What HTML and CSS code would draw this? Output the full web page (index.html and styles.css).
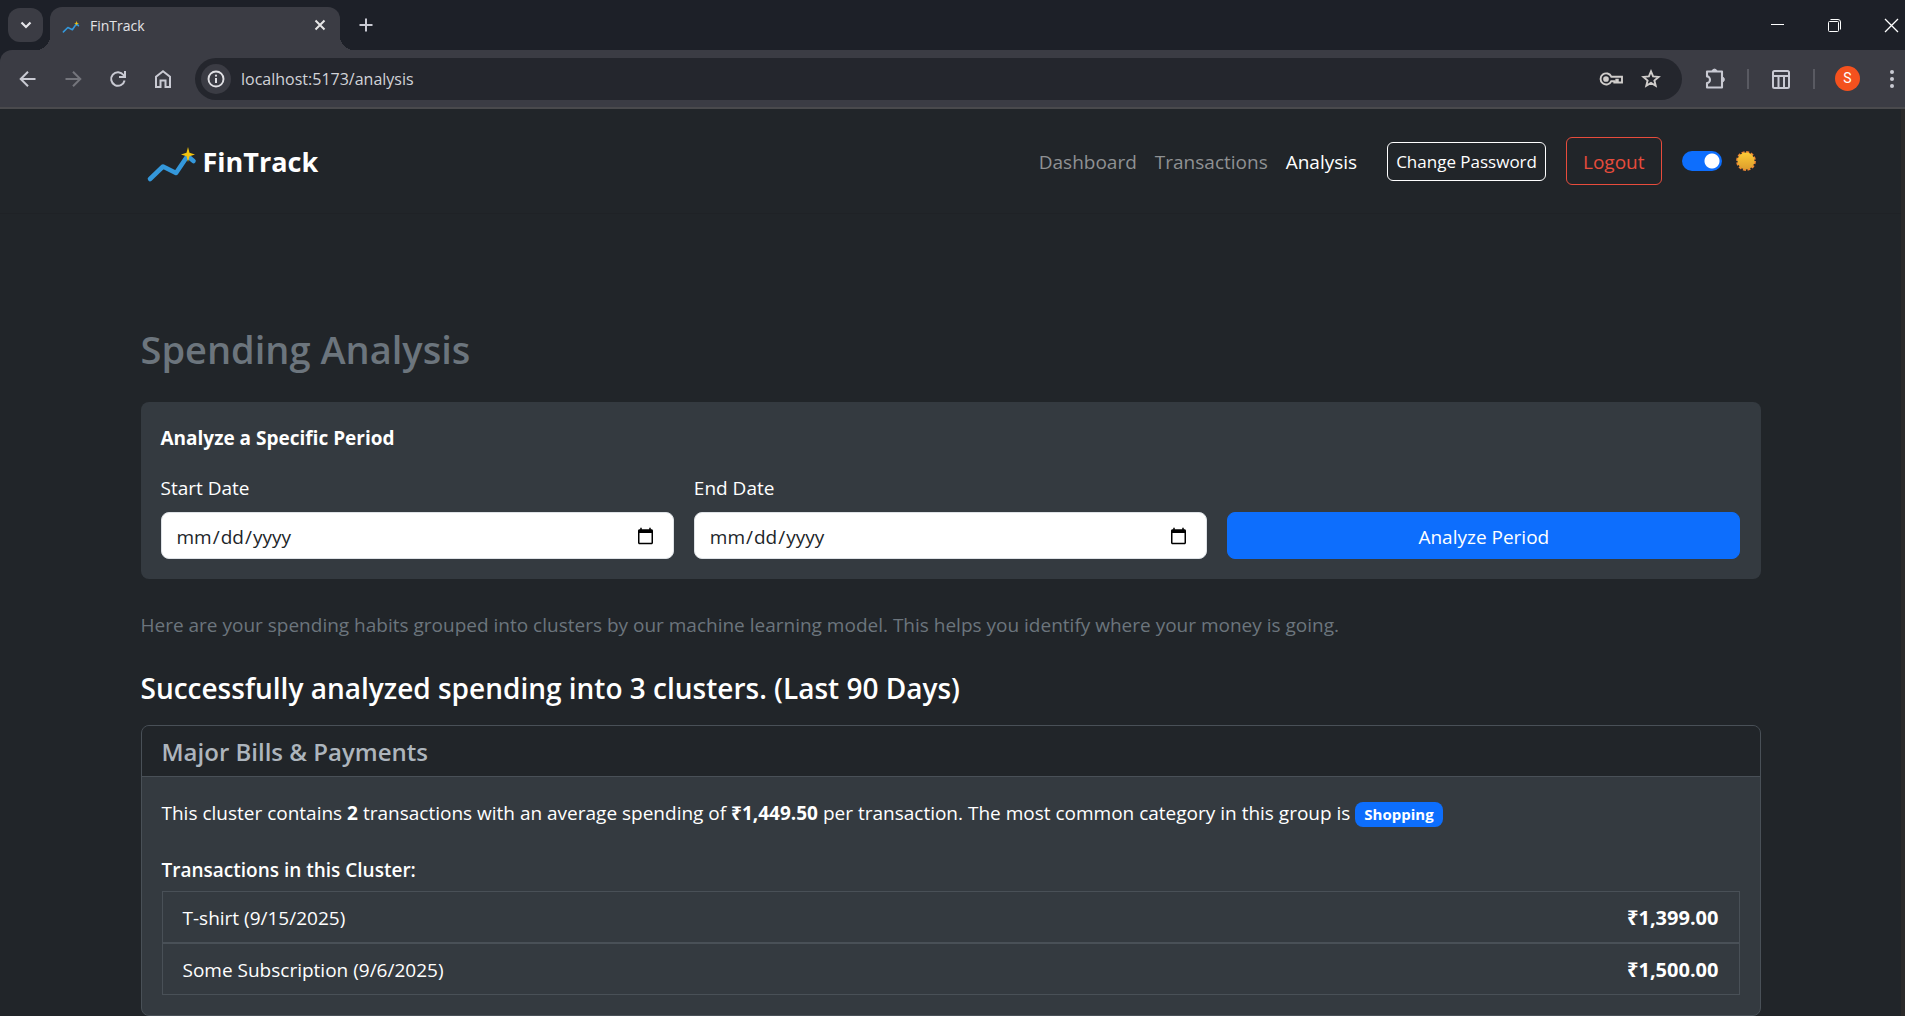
FILE: index.html
```html
<!DOCTYPE html>
<html lang="en-US">
<head>
<meta charset="utf-8">
<meta name="viewport" content="width=device-width, initial-scale=1">
<title>FinTrack</title>
<link rel="stylesheet" href="styles.css">
</head>
<body>
<svg class="defs" width="0" height="0" aria-hidden="true">
  <symbol id="fin-logo" viewBox="0 0 52 40">
    <path d="M4 34 17 21.500 30 28 41.500 11 47.500 16" fill="none" stroke="#3498db" stroke-width="4.600" stroke-linecap="round" stroke-linejoin="round"/>
    <path d="M42 2 43.500 7.800 49 9.500 43.500 11.200 42 17 40.500 11.200 35 9.500 40.500 7.800z" fill="#f1c40f"/>
  </symbol>
</svg>

<header class="browser">
  <div class="tabstrip">
    <button class="tab-search" aria-label="Search tabs">
      <svg width="14" height="14" viewBox="0 0 14 14"><path d="M2.500 4.500 7 9l4.500-4.500" fill="none" stroke="currentColor" stroke-width="2.200"/></svg>
    </button>
    <div class="tab">
      <svg class="favicon" width="18" height="14"><use href="#fin-logo"/></svg>
      <span class="tab-title">FinTrack</span>
      <button class="icon-btn" aria-label="Close tab">
        <svg width="12" height="12" viewBox="0 0 12 12"><path d="m1.500 1.500 9 9m0-9-9 9" stroke="currentColor" stroke-width="2"/></svg>
      </button>
    </div>
    <button class="icon-btn new-tab" aria-label="New tab">
      <svg width="14" height="14" viewBox="0 0 14 14"><path d="M7 .5v13M.5 7h13" stroke="currentColor" stroke-width="2"/></svg>
    </button>
    <div class="window-controls">
      <button class="icon-btn" aria-label="Minimize"><svg width="15" height="15" viewBox="0 0 15 15"><path d="M1 6.500h13" stroke="#fff"/></svg></button>
      <button class="icon-btn" aria-label="Restore"><svg width="15" height="15" viewBox="0 0 15 15" fill="none" stroke="#fff"><rect x="1.500" y="3.500" width="10" height="10" rx="1"/><path d="M3.500 1.500H11a2.500 2.500 0 0 1 2.500 2.500v7.500"/></svg></button>
      <button class="icon-btn" aria-label="Close"><svg width="15" height="15" viewBox="0 0 15 15"><path d="m1 1 13 13m0-13L1 14" stroke="#fff" stroke-width="1.300"/></svg></button>
    </div>
  </div>

  <div class="toolbar">
    <button class="icon-btn" aria-label="Back"><svg width="24" height="24" viewBox="0 0 24 24" fill="none" stroke="currentColor" stroke-width="2"><path d="M19.500 12H5M12 4.700 4.700 12l7.300 7.300"/></svg></button>
    <button class="icon-btn dim" aria-label="Forward"><svg width="24" height="24" viewBox="0 0 24 24" fill="none" stroke="currentColor" stroke-width="2"><path d="M4.500 12H19M12 4.700l7.300 7.300-7.300 7.300"/></svg></button>
    <button class="icon-btn" aria-label="Reload"><svg width="24" height="24" viewBox="0 0 24 24" fill="none" stroke="currentColor" stroke-width="2"><path d="M18.600 13.500A6.800 6.800 0 1 1 17.500 8l1.200 1.600M19 4v6h-6"/></svg></button>
    <button class="icon-btn" aria-label="Home"><svg width="24" height="24" viewBox="0 0 24 24" fill="none" stroke="currentColor" stroke-width="2"><path d="M5 20V9.700l7-5.400 7 5.400V20h-4.500v-6.500h-5V20z"/></svg></button>
    <div class="omnibox">
      <button class="site-info" aria-label="Site information"><svg width="18" height="18" viewBox="0 0 18 18"><circle cx="9" cy="9" r="7.500" fill="none" stroke="currentColor" stroke-width="1.900"/><path d="M9 8v5" stroke="currentColor" stroke-width="2"/><circle cx="9" cy="5.700" r="1.100" fill="currentColor"/></svg></button>
      <input class="url" type="text" aria-label="Address" value="localhost:5173/analysis">
      <div class="omnibox-actions">
        <button class="icon-btn" aria-label="Saved passwords"><svg width="24" height="24" viewBox="0 0 24 24" fill="none" stroke="currentColor" stroke-width="1.900"><path d="M12.300 9.700H23v5.800h-4.200v-2.800h-1.500v2.800h-2v-1.300h-3A5.600 5.600 0 1 1 12.300 9.700z"/><circle cx="7" cy="12" r="1.900" fill="currentColor"/></svg></button>
        <button class="icon-btn" aria-label="Bookmark"><svg width="24" height="24" viewBox="0 0 24 24" fill="none" stroke="currentColor" stroke-width="1.900"><path d="m12 4.400 2.100 5 5.500.5-4.200 3.600 1.300 5.300-4.700-2.900-4.700 2.900 1.300-5.300-4.200-3.600 5.500-.5z"/></svg></button>
      </div>
    </div>
    <div class="tools">
      <button class="icon-btn" aria-label="Extensions"><svg width="24" height="24" viewBox="0 0 24 24"><path d="M4 4.500h15v16H4V16a3 3.300 0 0 0 0-6.600z" fill="none" stroke="currentColor" stroke-width="2.100" stroke-linejoin="round"/><path d="M9 4a2.600 2.600 0 0 1 5 0zM19.500 10a2.600 2.600 0 0 1 0 5z" fill="currentColor" stroke="currentColor"/></svg></button>
      <span class="sep"></span>
      <button class="icon-btn" aria-label="Side panel"><svg width="24" height="24" viewBox="0 0 24 24" fill="none" stroke="currentColor" stroke-width="2"><rect x="4" y="4" width="16" height="17" rx="1.500"/><path d="M4 9h16M9.500 10v11M15 10v11"/></svg></button>
      <span class="sep"></span>
      <button class="avatar" aria-label="Profile">S</button>
      <button class="icon-btn" aria-label="Menu"><svg width="24" height="24" viewBox="0 0 24 24" fill="currentColor"><circle cx="12" cy="5" r="2"/><circle cx="12" cy="12" r="2"/><circle cx="12" cy="19" r="2"/></svg></button>
    </div>
  </div>
</header>

<div class="viewport">
  <nav class="navbar">
    <div class="navbar-inner">
      <a class="brand" href="#"><svg width="52" height="40" aria-hidden="true"><use href="#fin-logo"/></svg>FinTrack</a>
      <div class="nav-links">
        <a class="nav-link" href="#">Dashboard</a>
        <a class="nav-link" href="#">Transactions</a>
        <a class="nav-link active" href="#">Analysis</a>
      </div>
      <div class="nav-actions">
        <button class="btn btn-light">Change Password</button>
        <button class="btn btn-danger">Logout</button>
        <label class="theme">
          <input class="switch" type="checkbox" checked aria-label="Dark theme">
          <svg width="20" height="20" viewBox="0 0 20 20" aria-hidden="true">
            <defs><linearGradient id="sun" x1="0" y1="0" x2="0" y2="1"><stop offset="0" stop-color="#fccb36"/><stop offset="1" stop-color="#dd9d2d"/></linearGradient></defs>
            <circle cx="10" cy="10" r="8.800" fill="none" stroke="#f08a33" stroke-width="2.200" stroke-dasharray="3 1.600"/>
            <circle cx="10" cy="10" r="8.500" fill="url(#sun)"/>
          </svg>
        </label>
      </div>
    </div>
  </nav>

  <main class="container">
    <h1>Spending Analysis</h1>

    <form class="period">
      <h2>Analyze a Specific Period</h2>
      <div class="period-grid">
        <div><label for="start">Start Date</label><input class="date" id="start" type="date"></div>
        <div><label for="end">End Date</label><input class="date" id="end" type="date"></div>
        <button class="btn btn-primary" type="button">Analyze Period</button>
      </div>
    </form>

    <p class="intro">Here are your spending habits grouped into clusters by our machine learning model. This helps you identify where your money is going.</p>
    <h2 class="result">Successfully analyzed spending into 3 clusters. (Last 90 Days)</h2>

    <section class="cluster">
      <h3 class="cluster-head">Major Bills &amp; Payments</h3>
      <div class="cluster-body">
        <p>This cluster contains <strong>2</strong> transactions with an average spending of <strong>₹1,449.50</strong> per transaction. The most common category in this group is <span class="badge">Shopping</span></p>
        <h4>Transactions in this Cluster:</h4>
        <ul class="list">
          <li><span>T-shirt (9/15/2025)</span><strong>₹1,399.00</strong></li>
          <li><span>Some Subscription (9/6/2025)</span><strong>₹1,500.00</strong></li>
        </ul>
      </div>
    </section>
  </main>
</div>
</body>
</html>
```
FILE: styles.css
```css
* { box-sizing: border-box; }

body {
  margin: 0;
  height: 100vh;
  display: flex;
  flex-direction: column;
  overflow: hidden;
  background: #212529;
  color: #fff;
  font-family: "Open Sans", "Noto Sans", sans-serif;
  font-size: 19px;
  line-height: 30px;
}

h1, h2, h3, h4, p, ul { margin: 0; padding: 0; }
button, input { font: inherit; }
button { cursor: pointer; }
svg { display: block; flex: none; }
a { text-decoration: none; }
.defs { position: absolute; }

/* Browser window */
.browser { flex: none; background: #1d2028; border-bottom: 2px solid #4a4a4d; }

.tabstrip {
  height: 50px;
  padding: 7px 6px 0 8px;
  display: flex;
  align-items: center;
}

.icon-btn {
  display: block;
  padding: 0;
  border: 0;
  background: none;
  color: #c9cad3;
}
.icon-btn.dim { color: #74757c; }

.tab-search {
  width: 35px;
  height: 34px;
  margin: 0 7px 7px 0;
  padding: 0;
  display: grid;
  place-items: center;
  border: 0;
  border-radius: 12px;
  background: #3b3c44;
  color: #e6e6ea;
}

.tab {
  position: relative;
  width: 290px;
  height: 43px;
  padding: 0 14px 16px 12px;
  display: flex;
  align-items: flex-end;
  gap: 10px;
  border-radius: 12px 12px 0 0;
  background: #3b3c44;
}
.tab::before, .tab::after {
  content: "";
  position: absolute;
  bottom: 0;
  width: 14px;
  height: 14px;
}
.tab::before { left: -14px; background: radial-gradient(circle at 0 0, transparent 14px, #3b3c44 14px); }
.tab::after { right: -14px; background: radial-gradient(circle at 100% 0, transparent 14px, #3b3c44 14px); }
.tab-title { flex: 1; font-size: 14px; line-height: 16px; color: #e3e3e6; }
.tab .icon-btn { padding-bottom: 3px; color: #e6e6e6; }
.new-tab { margin: 0 0 7px 19px; }
.window-controls { margin: 0 0 7px auto; display: flex; gap: 42px; }

.toolbar {
  height: 57px;
  padding: 0 1px 0 16px;
  display: flex;
  align-items: center;
  gap: 21px;
  border-radius: 12px 0 0 0;
  background: #3b3c44;
}

.omnibox {
  flex: 1;
  height: 42px;
  margin-left: -1px;
  padding: 0 19px 0 6px;
  display: flex;
  align-items: center;
  gap: 10px;
  border-radius: 21px;
  background: #24262d;
}
.omnibox-actions { display: flex; gap: 16px; }
.site-info {
  width: 30px;
  height: 30px;
  padding: 0;
  display: grid;
  place-items: center;
  border: 0;
  border-radius: 50%;
  background: #3b3c44;
  color: #e0e0e4;
}
.url {
  flex: 1;
  min-width: 0;
  padding: 0;
  border: 0;
  background: none;
  color: #d2d3d8;
  font-size: 16px;
}
.omnibox .icon-btn { color: #d0cdcb; }

.tools { display: flex; align-items: center; gap: 20px; }
.sep { width: 2px; height: 20px; background: #595a62; }
.avatar {
  width: 25px;
  height: 25px;
  padding: 0;
  border: 0;
  border-radius: 50%;
  background: #f4511e;
  color: #fff;
  font-family: Roboto, sans-serif;
  font-size: 14px;
  line-height: 25px;
}

/* Page */
.viewport { flex: 1; min-height: 0; overflow: hidden; border-right: 4px solid #2b2a2a; }

.navbar { border-bottom: 1px solid #1f2226; }
.navbar-inner {
  max-width: 1650px;
  height: 104px;
  margin: 0 auto;
  padding: 0 20px;
  display: flex;
  align-items: center;
}
.brand {
  padding-top: 2px;
  display: flex;
  align-items: center;
  gap: 5px;
  color: #fff;
  font-size: 27px;
  font-weight: 700;
}
.brand svg { margin-top: 6px; }
.nav-links { margin-left: auto; padding-top: 2px; display: flex; gap: 18px; }
.nav-link { color: #8f9193; }
.nav-link.active { color: #fff; font-weight: 500; }
.nav-actions { margin-left: 30px; display: flex; align-items: center; gap: 20px; }
.theme { display: flex; align-items: center; gap: 14px; }

.btn {
  border: 1px solid;
  border-radius: 6px;
  background: none;
  white-space: nowrap;
}
.btn-light { padding: 4px 8px; border-color: #fff; color: #fff; font-size: 17px; line-height: 29px; }
.btn-danger { padding: 9px 16px 7px; border-color: #e74c3c; color: #e74c3c; }
.btn-primary { align-self: end; height: 47px; padding: 2px 16px 0; border-color: #0d6efd; border-radius: 8px; background: #0d6efd; color: #fff; }

.switch {
  appearance: none;
  width: 40px;
  height: 20px;
  margin: 0;
  border-radius: 10px;
  background: #0d6efd radial-gradient(circle at 30px 10px, #fff 7px, transparent 8px);
}

.container { max-width: 1650px; margin: 0 auto; padding: 110px 15px 0; }
h1 { margin-bottom: 28px; color: #6c757d; font-size: 38px; font-weight: 600; line-height: 50px; }

.period { padding: 20px; border-radius: 8px; background: #343a40; }
.period h2 { margin-bottom: 18px; font-size: 19px; font-weight: 700; line-height: 32px; }
.period-grid { display: grid; grid-template-columns: repeat(3, 1fr); gap: 20px; }
.period label { display: block; margin-bottom: 8px; line-height: 32px; }
.date {
  display: block;
  width: 100%;
  height: 47px;
  padding: 9px 16px 7px 14px;
  border: 1px solid #dee2e6;
  border-radius: 8px;
  background: #fff;
  color: #212529;
}

.intro { margin: 30px 0 28px; color: #6c757d; line-height: 32px; }
.result { margin-bottom: 18px; font-size: 28px; font-weight: 600; line-height: 38px; }

.cluster { border: 1px solid #495057; border-radius: 8px; overflow: hidden; background: #343a40; }
.cluster-head {
  padding: 11px 20px 9px;
  border-bottom: 1px solid #495057;
  background: #212529;
  color: #adb5bd;
  font-size: 24px;
  font-weight: 600;
}
.cluster-body { padding: 20px; }
.cluster-body p { line-height: 32px; }
.cluster-body h4 { margin: 28px 0 8px; font-size: 19px; font-weight: 600; line-height: 26px; }
.badge {
  display: inline-block;
  padding: 0 9px;
  border-radius: 8px;
  background: #0d6efd;
  font-size: 15px;
  font-weight: 700;
  line-height: 25px;
}
.list { list-style: none; }
.list li {
  padding: 11px 20px 9px;
  display: flex;
  justify-content: space-between;
  border: 1px solid #495057;
}
.list strong { font-size: 20px; }
```
